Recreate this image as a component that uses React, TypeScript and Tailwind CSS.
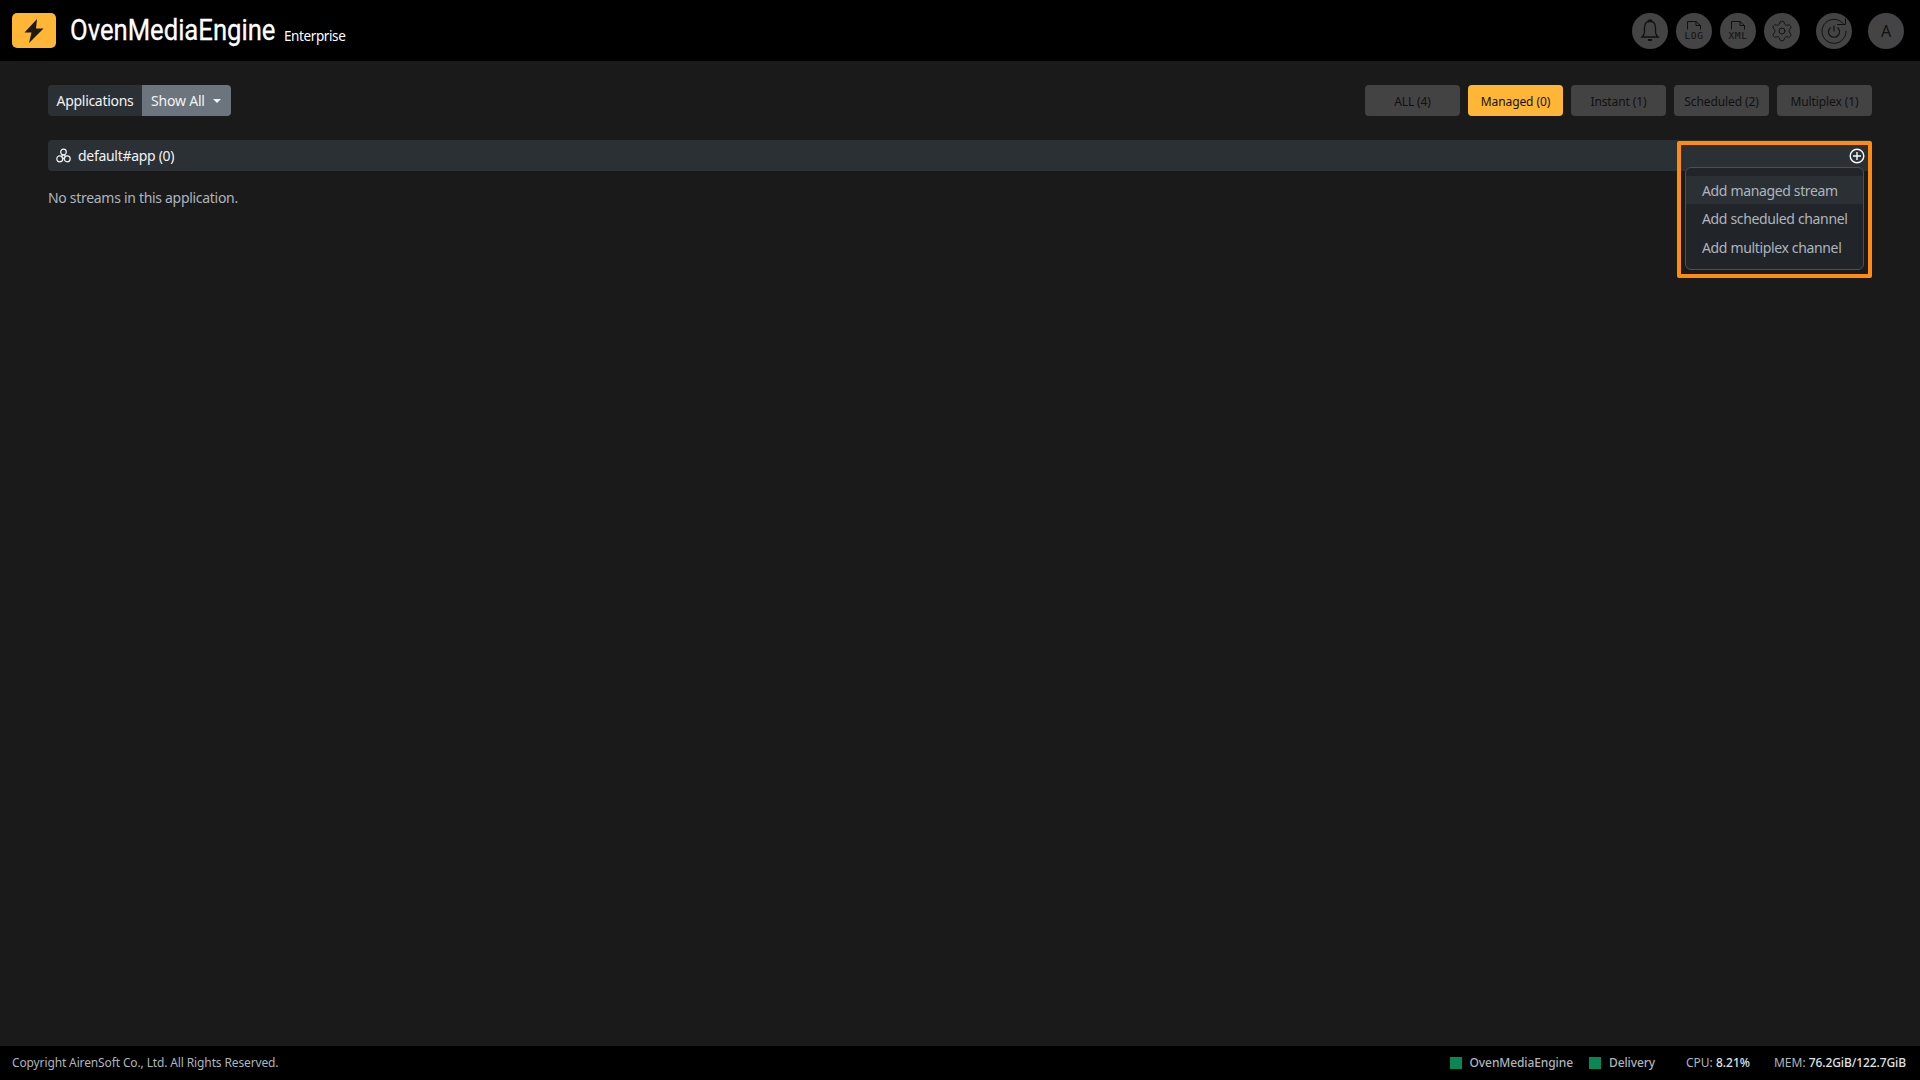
import React from "react";
import { Settings } from "lucide-react";

const sans = "font-['Noto_Sans',sans-serif]";

function IconButton({ children, className = "" }: { children: React.ReactNode; className?: string }) {
  return (
    <div className={`w-9 h-9 rounded-full bg-[#444444] flex items-center justify-center text-[#111111] ${className}`}>
      {children}
    </div>
  );
}

function FileIcon({ label }: { label: string }) {
  return (
    <svg width="30" height="30" viewBox="0 0 30 30" fill="none" stroke="currentColor" strokeWidth="1">
      <path d="M8.500 13.500V5.500h8.500l4.500 4v4" />
      <path d="M17 5.500v4h4.500" />
      <text x="15" y="23" textAnchor="middle" fontSize="9.500" fontFamily="'DejaVu Sans Mono', monospace" fill="currentColor" stroke="none" letterSpacing="0.6">
        {label}
      </text>
    </svg>
  );
}

function FilterButton({ label, active = false }: { label: string; active?: boolean }) {
  return (
    <div className={`w-[95px] h-[31px] pt-[2px] rounded-[4px] flex items-center justify-center text-xs tracking-[-0.1px] text-[#111111] ${active ? "bg-[#ffb636]" : "bg-[#434343]"}`}>
      {label}
    </div>
  );
}

export default function App() {
  return (
    <div className={`relative h-[1080px] flex flex-col bg-[#1a1a1a] overflow-hidden ${sans}`}>
      <header className="h-[61px] shrink-0 bg-black flex items-center justify-between pl-3 pr-4">
        <div className="flex items-center">
          <div className="w-11 h-[35px] rounded-[5px] bg-[#ffb636] flex items-center justify-center">
            <svg width="20" height="24" viewBox="0 0 20 24" fill="#1f1a10">
              <path d="M13 0 0.500 13.500h7L5 24 19.500 9.500h-7.500z" />
            </svg>
          </div>
          <div className="ml-[14px] w-[205px] whitespace-nowrap">
            <span className="inline-block origin-left scale-x-[0.855] text-[30px] leading-none text-white font-['Roboto',sans-serif] [-webkit-text-stroke:0.3px_white]">OvenMediaEngine</span>
          </div>
          <span className="ml-[9px] mt-[11px] text-[13.5px] tracking-[-0.4px] text-white">Enterprise</span>
        </div>
        <div className="flex items-center">
          <div className="flex gap-2">
            <IconButton>
              <svg width="26" height="26" viewBox="0 0 26 26" fill="none" stroke="currentColor" strokeWidth="1.300">
                <path d="M13 3.500c-3.500 0-5.500 2.600-5.500 6v4.500c0 2-1 3.500-2.500 5h16c-1.500-1.500-2.500-3-2.500-5V9.500c0-3.400-2-6-5.500-6z" />
                <path d="M11 3.500c0-1 .8-1.500 2-1.500s2 .5 2 1.500" />
                <path d="M11 22h4" strokeWidth="2" />
              </svg>
            </IconButton>
            <IconButton><FileIcon label="LOG" /></IconButton>
            <IconButton><FileIcon label="XML" /></IconButton>
            <IconButton>
              <Settings size={24} strokeWidth={0.9} />
            </IconButton>
          </div>
          <IconButton className="ml-4">
            <svg width="30" height="30" viewBox="0 0 30 30" fill="none" stroke="currentColor" strokeWidth="1">
              <path d="M24.500 8A12 12 0 1 0 27 15" />
              <path d="M18 8.500h8.500V2.500" />
              <path d="M11.500 11.500a5.500 5.500 0 1 0 7 0" strokeWidth="1.200" />
              <path d="M15 9.500v6" strokeWidth="1.200" />
            </svg>
          </IconButton>
          <IconButton className="ml-4"><span className="text-base">A</span></IconButton>
        </div>
      </header>

      <main className="flex-1 px-12 pt-6 relative">
        <div className="flex justify-between items-start">
          <div className="flex h-[31px] rounded-[4px] overflow-hidden text-sm">
            <div className="w-[94px] bg-[#2b3035] text-[#f1f3f5] tracking-[-0.3px] flex items-center justify-center">Applications</div>
            <div className="w-[89px] bg-[#6c757d] text-[#f1f3f5] tracking-[-0.2px] flex items-center pl-[9px] gap-[7px]">
              Show All
              <span className="ml-px w-0 h-0 border-x-[4px] border-x-transparent border-t-[4px] border-t-[#f1f3f5]" />
            </div>
          </div>
          <div className="flex gap-2">
            <FilterButton label="ALL (4)" />
            <FilterButton label="Managed (0)" active />
            <FilterButton label="Instant (1)" />
            <FilterButton label="Scheduled (2)" />
            <FilterButton label="Multiplex (1)" />
          </div>
        </div>

        <div className="relative mt-6 text-sm tracking-[-0.3px]">
          <div className="h-[31px] rounded-[4px] bg-[#2b3035] flex items-center justify-between pl-[8px] pr-[7px] text-[#f1f3f5]">
            <div className="flex items-center gap-[7px]">
              <svg width="15" height="15" viewBox="0 0 15 15" fill="none" stroke="#f1f3f5" strokeWidth="1.200">
                <circle cx="7.500" cy="4" r="2.800" />
                <circle cx="3.800" cy="10.800" r="3" />
                <circle cx="11.200" cy="10.800" r="3" />
                <circle cx="7.500" cy="8.600" r="1.700" />
              </svg>
              default#app (0)
            </div>
            <svg width="16" height="16" viewBox="0 0 16 16" fill="none" stroke="#f8f9fa" strokeWidth="1.400">
              <circle cx="8" cy="8" r="6.800" />
              <path d="M8 4v8M4 8h8" />
            </svg>
          </div>

          <p className="mt-[17px] text-[#adb5bd]">No streams in this application.</p>

          <div className="absolute right-[8px] top-[27px] w-[179px] h-[103px] rounded-[6px] border border-[#495057] bg-[#212529] pt-2 text-[#adb5bd] tracking-[-0.35px]">
            <div className="h-[28px] pl-4 pt-[2px] flex items-center bg-[#2b3035]">Add managed stream</div>
            <div className="h-[29px] pl-4 flex items-center">Add scheduled channel</div>
            <div className="h-[29px] pl-4 flex items-center">Add multiplex channel</div>
          </div>
          <div className="absolute right-0 top-[1px] w-[195px] h-[137px] border-[4px] border-[#ff8c0f] rounded-[2px]" />
        </div>
      </main>

      <footer className="h-[34px] shrink-0 bg-black flex items-center justify-between pl-3 pr-[14px] text-xs text-[#adb5bd]">
        <span className="tracking-[-0.13px]">Copyright AirenSoft Co., Ltd. All Rights Reserved.</span>
        <div className="flex items-center">
          <span className="w-3 h-3 bg-[#0a8754] mr-2" />
          <span className="font-medium tracking-[-0.1px]">OvenMediaEngine</span>
          <span className="w-3 h-3 bg-[#0a8754] ml-4 mr-2" />
          <span className="font-medium tracking-[-0.1px]">Delivery</span>
          <span className="ml-[31px]">CPU: <span className="text-[#dee2e6] font-medium">8.21%</span></span>
          <span className="ml-6">MEM: <span className="text-[#dee2e6] font-medium tracking-[-0.1px]">76.2GiB/122.7GiB</span></span>
        </div>
      </footer>
    </div>
  );
}
